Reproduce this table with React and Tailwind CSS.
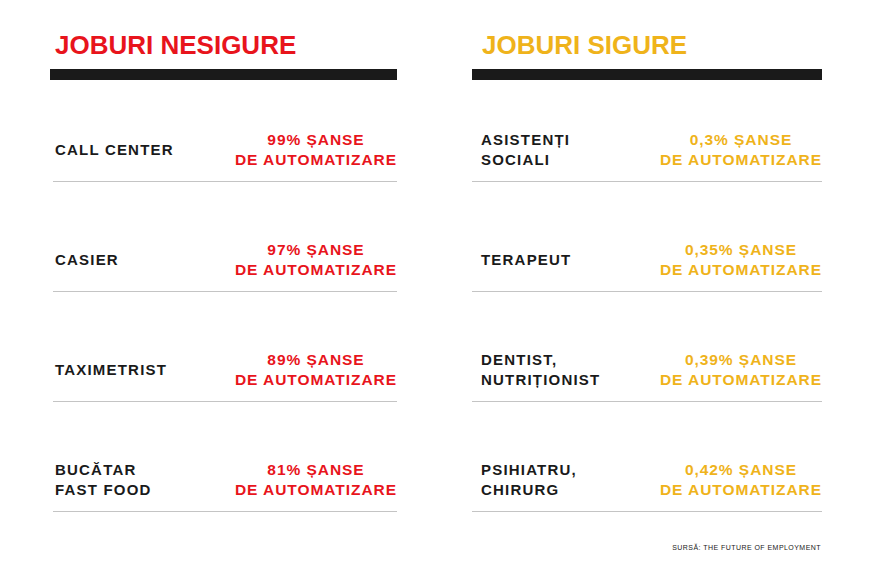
const unsafeJobs = [
  { label: ['CALL CENTER'], pct: '99%' },
  { label: ['CASIER'], pct: '97%' },
  { label: ['TAXIMETRIST'], pct: '89%' },
  { label: ['BUCĂTAR', 'FAST FOOD'], pct: '81%' },
];

const safeJobs = [
  { label: ['ASISTENȚI', 'SOCIALI'], pct: '0,3%' },
  { label: ['TERAPEUT'], pct: '0,35%' },
  { label: ['DENTIST,', 'NUTRIȚIONIST'], pct: '0,39%' },
  { label: ['PSIHIATRU,', 'CHIRURG'], pct: '0,42%' },
];

function JobRow({ job, color, first, labelPad, lineIndent }) {
  return (
    <div
      className={`${first ? 'mt-[38px]' : 'mt-[46px]'} ${lineIndent} h-[64px] flex items-center justify-between border-b border-[#c4c4c4]`}
    >
      <div className={`${labelPad} text-[15px] leading-[20px] font-bold tracking-[1.2px] text-[#1a1a1a]`}>
        {job.label.map(l => (
          <div key={l}>{l}</div>
        ))}
      </div>
      <div className={`text-center text-[15.5px] leading-[20px] font-bold tracking-[0.95px] ${color}`}>
        <div>{job.pct} ȘANSE</div>
        <div>DE AUTOMATIZARE</div>
      </div>
    </div>
  );
}

function Column({ title, titleColor, titlePad, labelPad, lineIndent, jobs, width }) {
  return (
    <div className={width}>
      <h2 className={`${titlePad} text-[26px] leading-[26px] font-bold ${titleColor}`}>{title}</h2>
      <div className="mt-[11px] h-[11px] bg-[#1a1a1a]" />
      {jobs.map((job, i) => (
        <JobRow
          key={job.pct}
          job={job}
          color={titleColor}
          first={i === 0}
          labelPad={labelPad}
          lineIndent={lineIndent}
        />
      ))}
    </div>
  );
}

export default function App() {
  return (
    <div className="w-[870px] h-[580px] bg-white font-[family-name:'Liberation_Sans',Arial,sans-serif] relative">
      <div className="flex pl-[50px] pt-[32px] gap-[75px]">
        <Column
          title="JOBURI NESIGURE"
          titleColor="text-[#e8141c]"
          titlePad="pl-[5px]"
          labelPad="pl-[2px]"
          lineIndent="ml-[3px]"
          jobs={unsafeJobs}
          width="w-[347px]"
        />
        <Column
          title="JOBURI SIGURE"
          titleColor="text-[#efb31b]"
          titlePad="pl-[10px]"
          labelPad="pl-[9px]"
          lineIndent=""
          jobs={safeJobs}
          width="w-[350px]"
        />
      </div>
      <div className="flex justify-end pr-[49px] mt-[32px]">
        <p className="text-[7px] leading-none tracking-[0.45px] text-[#1a1a1a]">SURSĂ: THE FUTURE OF EMPLOYMENT</p>
      </div>
    </div>
  );
}
